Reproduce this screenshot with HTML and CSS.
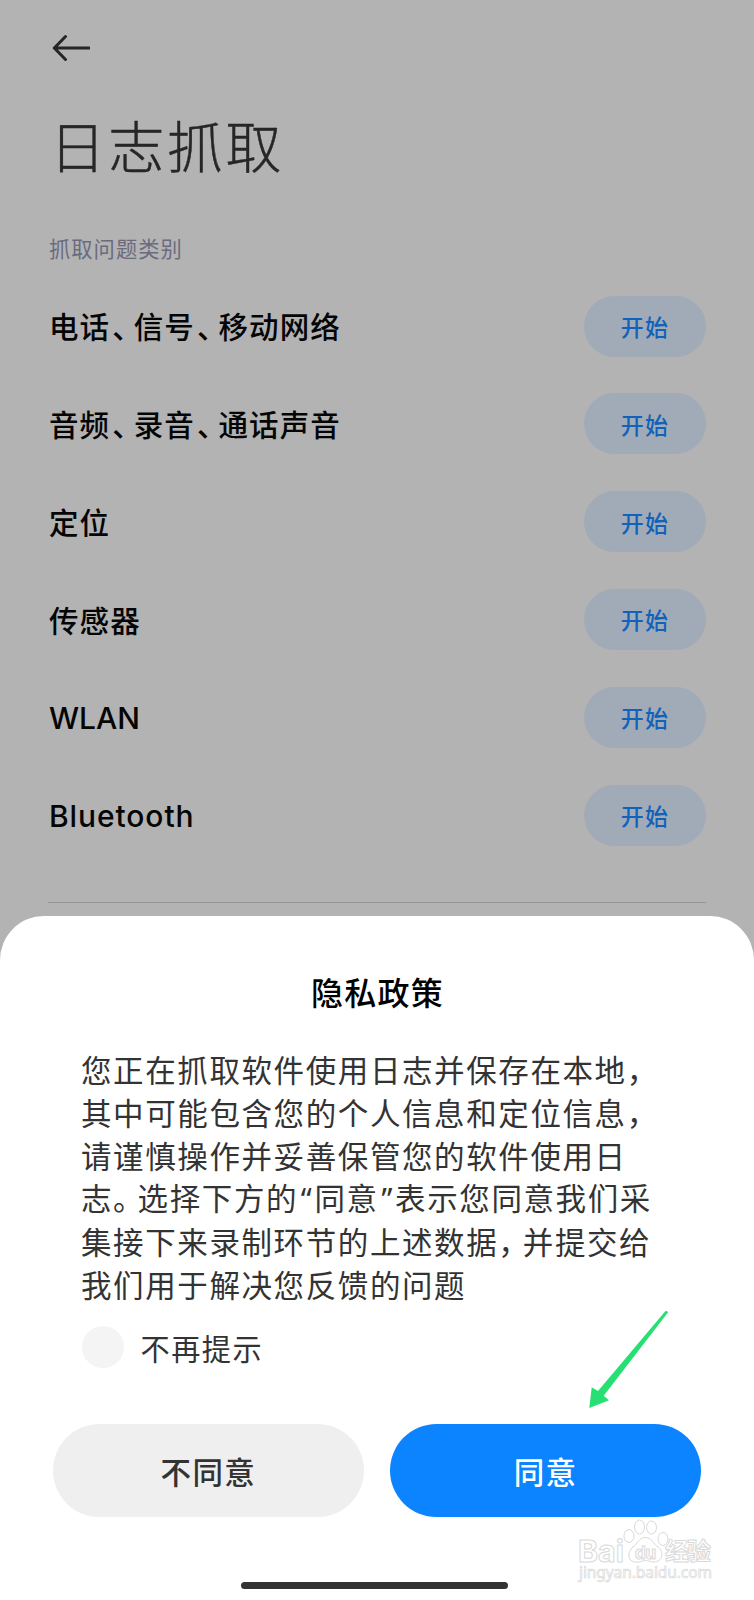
FILE: index.html
```html
<!DOCTYPE html>
<html lang="zh-CN">
<head>
    <meta charset="UTF-8">
    <meta name="viewport" content="width=device-width, initial-scale=1.0">
    <title>日志抓取</title>
    <link rel="stylesheet" href="styles.css">
</head>
<body>

    <div class="screen">
        <main class="page">
            <a class="back">
                <svg width="40" height="30" viewBox="0 0 40 30">
                    <path d="M15.5 3.5 L4.3 15 L15.5 26.5 M4.3 15 H39" fill="none" stroke="#262626" stroke-width="3" stroke-linecap="round" stroke-linejoin="round"/>
                </svg>
            </a>
            <h1>日志抓取</h1>
            <h2>抓取问题类别</h2>

            <ul class="list">
                <li><span>电话<i class="comma">、</i>信号<i class="comma">、</i>移动网络</span><button>开始</button></li>
                <li><span>音频<i class="comma">、</i>录音<i class="comma">、</i>通话声音</span><button>开始</button></li>
                <li><span>定位</span><button>开始</button></li>
                <li><span>传感器</span><button>开始</button></li>
                <li><span class="latin wlan">WLAN</span><button>开始</button></li>
                <li><span class="latin">Bluetooth</span><button>开始</button></li>
            </ul>
            <hr>
        </main>

        <section class="sheet">
            <h3>隐私政策</h3>
            <p class="text">
                您正在抓取软件使用日志并保存在本地，<br>
                其中可能包含您的个人信息和定位信息，<br>
                请谨慎操作并妥善保管您的软件使用日<br>
                志<i class="stop">。</i>选择下方的<i class="quote">“</i>同意<i class="quote">”</i>表示您同意我们采<br>
                集接下来录制环节的上述数据<i class="stop">，</i>并提交给<br>
                我们用于解决您反馈的问题
            </p>
            <div class="remember"><span class="check"></span><span class="label">不再提示</span></div>
            <div class="actions">
                <button class="cancel">不同意</button>
                <button class="agree">同意</button>
            </div>
            <div class="home-bar"></div>
        </section>

        <!-- Flecha verde -->
        <svg class="pointer" width="82" height="100" viewBox="0 0 82 100">
            <path d="M1.3 98 L3.7 77.3 L10 81 L77.7 0.7 L80.3 2 L15.7 85.7 L21 90.3 Z" fill="#26e074"/>
        </svg>

        <svg class="watermark" width="144" height="70" viewBox="0 0 144 70">
            <g fill="#fff" stroke="#d9d9d9" stroke-width="1">
                <text class="mark" x="7" y="44" font-size="30" textLength="46" lengthAdjust="spacingAndGlyphs">Bai</text>
                <ellipse cx="58" cy="18" rx="5" ry="6.5"/>
                <ellipse cx="68.5" cy="9" rx="5" ry="7"/>
                <ellipse cx="80.5" cy="9.5" rx="5" ry="6.5"/>
                <ellipse cx="92" cy="21" rx="5" ry="6.5"/>
                <path d="M74.5 19.5 C81 19.5 82 26 87 29 C94 34 91 44 83 44 C79 44 78 42.5 74.5 42.5 C71 42.5 69 45 64 44 C56 43 56 34 62 29 C67 25 68 19.5 74.5 19.5 Z"/>
                <text class="mark" x="64" y="40.5" font-size="17" textLength="21">du</text>
                <text class="mark cjk" x="94" y="42" font-size="24" textLength="46">经验</text>
                <text class="site" x="8" y="60" font-size="15.5" textLength="133">jingyan.baidu.com</text>
            </g>
        </svg>
    </div>

</body>
</html>
```
FILE: styles.css
```css
* {
    box-sizing: border-box;
}

body {
    margin: 0;
    font-family: "Noto Sans CJK SC", sans-serif;
    background-color: #b3b3b3;
}

h1, h2, h3, p, ul {
    margin: 0;
    padding: 0;
    font-weight: 400;
}

i {
    font-style: normal;
}

button {
    border: none;
    padding: 0;
    font-family: inherit;
    cursor: pointer;
}

.screen {
    position: relative;
    display: flex;
    flex-direction: column;
    width: 754px;
    height: 1600px;
    overflow: hidden;
}

.page {
    height: 915.7px;
    padding: 33px 48px 0;
}

.back {
    display: block;
    height: 30px;
    padding-left: 2px;
}

.back svg {
    display: block;
}

h1 {
    margin-top: 41px;
    padding-left: 1.5px;
    font-size: 56px;
    font-weight: 300;
    line-height: 80px;
    letter-spacing: 2.7px;
    color: #262626;
    -webkit-text-stroke: 0.4px #262626;
}

h2 {
    margin-top: 46.5px;
    padding-left: 1px;
    font-size: 21.3px;
    line-height: 34px;
    letter-spacing: 1px;
    color: #6b6b7f;
}

.list {
    margin-top: 12.8px;
    list-style: none;
}

.list li {
    display: flex;
    justify-content: space-between;
    align-items: center;
    height: 97.8px;
    padding-left: 1px;
    font-size: 29.5px;
    font-weight: 500;
    letter-spacing: 1.1px;
    color: #050505;
}

.list span {
    padding-bottom: 1.5px;
}

/* La coma china va más estrecha */
.comma {
    padding-left: 2px;
    letter-spacing: -8px;
}

.list .latin {
    padding: 2px 0 0;
    font-family: Inter, sans-serif;
    font-size: 30px;
    letter-spacing: 0.9px;
}

.list .wlan {
    letter-spacing: 0;
}

.list button {
    width: 122px;
    height: 61px;
    padding-bottom: 0.5px;
    border-radius: 31px;
    background-color: #a1abb7;
    font-size: 23px;
    font-weight: 500;
    letter-spacing: 1.2px;
    color: #1262ba;
}

hr {
    height: 1px;
    margin: 37.5px 0 0;
    border: none;
    background-color: #979797;
}

.sheet {
    flex: 1;
    padding: 53px 53px 0;
    border-radius: 44px 44px 0 0;
    background-color: #fff;
}

h3 {
    padding-left: 1px;
    font-size: 32px;
    font-weight: 500;
    line-height: 44px;
    letter-spacing: 1.2px;
    text-align: center;
    color: #000;
}

.text {
    margin-top: 35.5px;
    padding-left: 28px;
    font-size: 30.5px;
    line-height: 42.67px;
    letter-spacing: 1.6px;
    white-space: nowrap;
    color: #333;
}

.stop {
    letter-spacing: -6px;
}

.quote {
    display: inline-block;
    width: 16.4px;
    font-family: "Noto Sans", sans-serif;
    letter-spacing: 0;
    text-align: center;
}

.remember {
    display: flex;
    align-items: center;
    gap: 17px;
    height: 42px;
    margin-top: 21px;
    padding-left: 28.5px;
    font-size: 29.2px;
    letter-spacing: 1.5px;
    color: #333;
}

.label {
    padding-bottom: 1px;
}

.check {
    width: 42px;
    height: 42px;
    border-radius: 50%;
    background-color: #f4f4f4;
}

.actions {
    display: flex;
    gap: 26.5px;
    margin-top: 55.5px;
}

.actions button {
    flex: 1;
    height: 93.5px;
    padding-top: 1px;
    border-radius: 47px;
    font-size: 30.5px;
    font-weight: 500;
    letter-spacing: 1.4px;
}

.cancel {
    background-color: #efefef;
    color: #333;
}

.agree {
    background-color: #0d84ff;
    color: #fff;
}

.home-bar {
    width: 267px;
    height: 7px;
    margin: 64.5px 0 0 188px;
    border-radius: 4px;
    background-color: #333;
}

.pointer {
    position: absolute;
    left: 588px;
    top: 1310px;
}

.watermark {
    position: absolute;
    left: 571px;
    top: 1518px;
}

.mark {
    font-family: Inter, sans-serif;
    font-weight: 700;
}

.cjk {
    font-family: "Noto Sans CJK SC", sans-serif;
}

.site {
    font-family: "Noto Sans", sans-serif;
    stroke-width: 0.7px;
}
```
